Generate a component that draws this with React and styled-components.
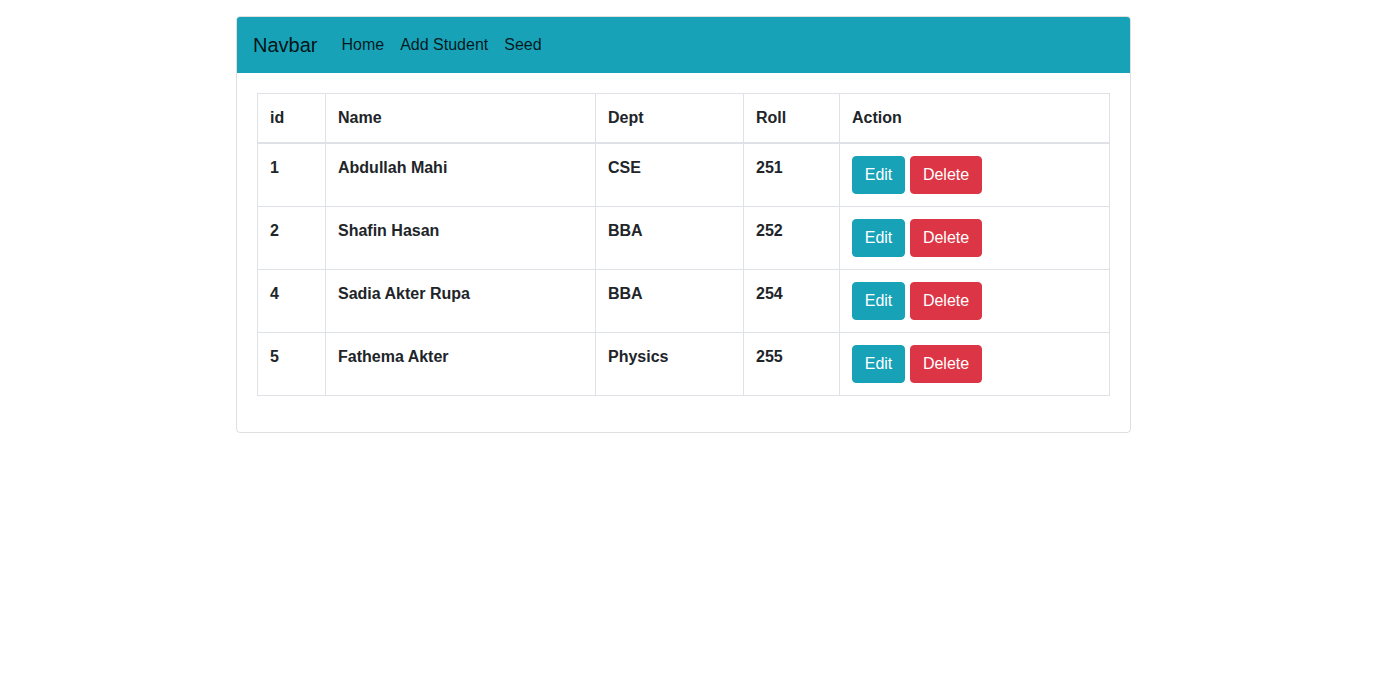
import React from "react";
import styled, { createGlobalStyle } from "styled-components";

const students = [
  { id: 1, name: "Abdullah Mahi", dept: "CSE", roll: 251 },
  { id: 2, name: "Shafin Hasan", dept: "BBA", roll: 252 },
  { id: 4, name: "Sadia Akter Rupa", dept: "BBA", roll: 254 },
  { id: 5, name: "Fathema Akter", dept: "Physics", roll: 255 },
];

const App = () => {
  return (
    <Page>
      <GlobalStyle />
      <Card>
        <Navbar>
          <Brand>Navbar</Brand>
          <NavLink>Home</NavLink>
          <NavLink>Add Student</NavLink>
          <NavLink>Seed</NavLink>
        </Navbar>
        <CardBody>
          <Table>
            <colgroup>
              <col style={{ width: 68 }} />
              <col style={{ width: 270 }} />
              <col style={{ width: 148 }} />
              <col style={{ width: 96 }} />
              <col />
            </colgroup>
            <thead>
              <tr>
                <Th>id</Th>
                <Th>Name</Th>
                <Th>Dept</Th>
                <Th>Roll</Th>
                <Th>Action</Th>
              </tr>
            </thead>
            <tbody>
              {students.map((s) => (
                <tr key={s.id}>
                  <Td>{s.id}</Td>
                  <Td>{s.name}</Td>
                  <Td>{s.dept}</Td>
                  <Td>{s.roll}</Td>
                  <Td>
                    <Actions>
                      <Button color="#17a2b8" $w={53}>Edit</Button>
                      <Button color="#dc3545" $w={72}>Delete</Button>
                    </Actions>
                  </Td>
                </tr>
              ))}
            </tbody>
          </Table>
        </CardBody>
      </Card>
    </Page>
  );
};

export default App;

const GlobalStyle = createGlobalStyle`
  body {
    margin: 0;
    font-family: "Liberation Sans", Arial, sans-serif;
    font-size: 16px;
    line-height: 1.5;
    color: #212529;
    background: #fff;
  }
`;

const Page = styled.div`
  padding: 16px 0 0 236px;
`;

const Card = styled.div`
  width: 893px;
  border: 1px solid rgba(0, 0, 0, 0.125);
  border-radius: 4px;
  overflow: hidden;
`;

const Navbar = styled.nav`
  display: flex;
  align-items: center;
  height: 56px;
  padding: 0 16px;
  background: #17a2b8;
`;

const Brand = styled.span`
  font-size: 20px;
  line-height: 30px;
  color: rgba(0, 0, 0, 0.9);
  margin-right: 16px;
`;

const NavLink = styled.span`
  padding: 8px;
  font-size: 16px;
  line-height: 24px;
  color: rgba(0, 0, 0, 0.85);
`;

const CardBody = styled.div`
  padding: 20px;
`;

const Table = styled.table`
  width: 853px;
  border-collapse: collapse;
  table-layout: fixed;
  margin-bottom: 16px;
`;

const Th = styled.th`
  text-align: left;
  vertical-align: bottom;
  padding: 12px;
  border: 1px solid #dee2e6;
  border-bottom-width: 2px;
  font-weight: bold;
`;

const Td = styled.td`
  vertical-align: top;
  padding: 12px;
  border: 1px solid #dee2e6;
  font-weight: bold;
`;

const Actions = styled.div`
  display: flex;
  gap: 5px;
`;

const Button = styled.button`
  width: ${(p) => p.$w}px;
  font-family: "Liberation Sans", Arial, sans-serif;
  font-size: 16px;
  line-height: 24px;
  font-weight: normal;
  padding: 6px 0;
  text-align: center;
  border: 1px solid ${(p) => p.color};
  border-radius: 4px;
  background: ${(p) => p.color};
  color: #fff;
`;
